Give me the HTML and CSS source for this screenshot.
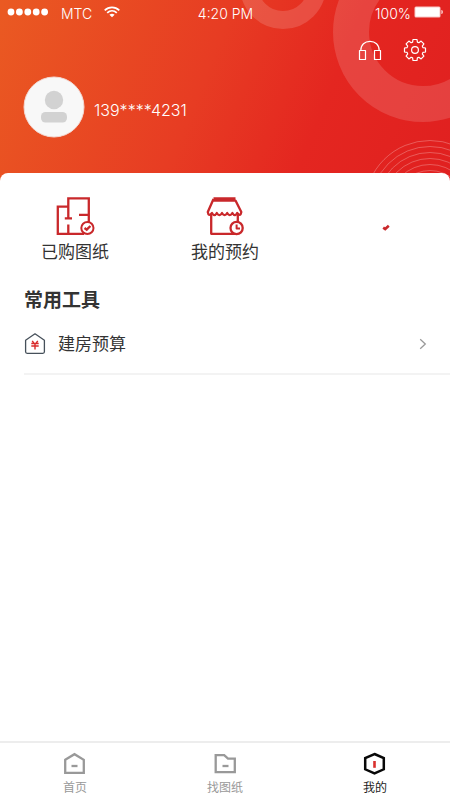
FILE: index.html
```html
<!DOCTYPE html>
<html lang="zh-CN">
<head>
<meta charset="utf-8">
<meta name="viewport" content="width=device-width, initial-scale=1">
<title>我的</title>
<link rel="stylesheet" href="styles.css">
</head>
<body>
<div class="app">
  <header class="hero">
    <svg class="hero-art" viewBox="0 0 450 182" preserveAspectRatio="xMaxYMin slice" fill="none" stroke="#fff" aria-hidden="true">
      <circle cx="423" cy="32" r="72" stroke-width="36" stroke-opacity=".14"/>
      <circle cx="283" cy="-14" r="34" stroke-width="18" stroke-opacity=".15"/>
      <g stroke-opacity=".26">
        <circle cx="430" cy="205.500" r="65"/><circle cx="430" cy="205.500" r="59"/><circle cx="430" cy="205.500" r="53"/>
        <circle cx="430" cy="205.500" r="47"/><circle cx="430" cy="205.500" r="41"/><circle cx="430" cy="205.500" r="35"/>
      </g>
    </svg>
    <div class="status">
      <div class="status-left">
        <svg width="42" height="8" viewBox="0 0 42 8" fill="#fff" aria-hidden="true"><circle cx="4" cy="4" r="3.4"/><circle cx="12.4" cy="4" r="3.4"/><circle cx="20.8" cy="4" r="3.4"/><circle cx="29.2" cy="4" r="3.4"/><circle cx="37.6" cy="4" r="3.4"/></svg>
        <span class="status-text">MTC</span>
        <svg width="16" height="12" viewBox="0 0 16 12" fill="none" stroke="#fff" stroke-width="1.7" aria-hidden="true"><path d="M.7 4.3C4.9.3 11.1.3 15.3 4.3"/><path d="M3.2 6.9C6 4.2 10 4.2 12.8 6.9"/><path d="M8 11.3 5.4 8.8Q8 6.7 10.6 8.8Z" fill="#fff" stroke="none"/></svg>
      </div>
      <span class="status-text">4:20 PM</span>
      <div class="status-right">
        <span class="status-text">100%</span>
        <svg width="30" height="12" viewBox="0 0 30 12" aria-hidden="true"><rect x=".5" y=".5" width="26" height="11" rx="1.5" fill="#fff" fill-opacity=".75"/><rect x="1.5" y="1.5" width="24" height="9" rx=".5" fill="#fff"/><path d="M27.5 4h.6q1.4 2 0 4h-.6z" fill="#fff"/></svg>
      </div>
    </div>
    <div class="tools">
      <button class="icon-button" type="button" aria-label="客服">
        <svg width="24" height="24" viewBox="0 0 24 24" fill="none" stroke="#fff" stroke-width="1.2" stroke-linejoin="round" aria-hidden="true"><path d="M2.8 12.5C2.8 6.6 6.8 3.4 12 3.4S21.2 6.6 21.2 12.5"/><rect x="1.5" y="12.5" width="6" height="9"/><rect x="16.5" y="12.5" width="6" height="9"/></svg>
      </button>
      <button class="icon-button" type="button" aria-label="设置">
        <svg width="24" height="24" viewBox="-12 -12 24 24" fill="none" stroke="#fff" stroke-width="1.2" stroke-linejoin="round" aria-hidden="true"><path d="M-2-10.5H2L2.4-7.9 3.9-7.3 6.1-8.9 8.9-6.1 7.3-3.9 7.9-2.4 10.5-2V2L7.9 2.4 7.3 3.9 8.9 6.1 6.1 8.9 3.9 7.3 2.4 7.9 2 10.5H-2L-2.4 7.9-3.9 7.3-6.1 8.9-8.9 6.1-7.3 3.9-7.9 2.4-10.5 2V-2L-7.9-2.4-7.3-3.9-8.9-6.1-6.1-8.9-3.9-7.3-2.4-7.9Z"/><circle r="3.4"/></svg>
      </button>
    </div>
    <div class="profile">
      <svg width="62" height="62" viewBox="0 0 62 62" aria-hidden="true"><circle cx="31" cy="31" r="30" fill="#f8f8f8" stroke="#f3d9d3"/><circle cx="31" cy="24" r="9.2" fill="#d2d2d2"/><rect x="18" y="36" width="26" height="10.5" rx="4.5" fill="#d2d2d2"/></svg>
      <span class="phone">139****4231</span>
    </div>
  </header>

  <main class="sheet">
    <nav class="actions" aria-label="快捷入口">
      <a class="action" href="#plans">
        <svg width="42" height="42" viewBox="0 0 42 42" fill="none" stroke="#c9282b" stroke-width="2.3" aria-hidden="true"><path d="M14.3 24.3V4.3H34.8V28M14.3 12.7H3.8V39.8H30M14.3 39.8V30.5M10.8 24.3H18M25 20.8H34.8"/><circle cx="33.4" cy="34" r="6.1" fill="#fff" stroke-width="2"/><path d="M30.5 34 32.7 35.6 36.4 32" stroke-width="2.4"/></svg>
        <span>已购图纸</span>
      </a>
      <a class="action" href="#bookings">
        <svg width="42" height="42" viewBox="0 0 42 42" fill="none" stroke="#c9282b" stroke-width="2.3" stroke-linejoin="round" aria-hidden="true"><path d="M9.5 4.3H31.5M9.5 6.6H31.5L37.3 18Q36.5 23.2 33.2 19 30.8 23.2 28.4 19 25.8 23.2 23.2 19 20.6 23.2 18 19 15.4 23.2 12.8 19 10.4 23.2 8 19 4.5 23.2 3.8 18L9.5 5"/><path d="M7.2 20.5V39.8H31M33.8 20.5V28"/><circle cx="32.6" cy="34" r="6.1" fill="#fff" stroke-width="2.3"/><path d="M32.6 30.5V34.4H36" stroke-width="2"/></svg>
        <span>我的预约</span>
      </a>
      <span class="action" aria-hidden="true">
        <svg width="42" height="42" viewBox="0 0 42 42" fill="none" stroke="#c9282b" stroke-width="2.6"><path d="M29.2 33.6 31.2 35 34.8 31.8"/></svg>
      </span>
    </nav>

    <section class="common">
      <h2>常用工具</h2>
      <a class="row" href="#budget">
        <svg width="22" height="22" viewBox="0 0 22 22" fill="none" aria-hidden="true"><path d="M1.6 7.2 11 .8 20.4 7.2V18.8Q20.4 20.3 18.9 20.3H3.1Q1.6 20.3 1.6 18.8Z" stroke="#46505a" stroke-width="1.3" stroke-linejoin="round"/><path d="M8.2 7.8 9.8 10M13.8 7.8 12.2 10M7.3 10.500H14.7M7.3 13H14.7M11 10.500V16.500" stroke="#d92b2b" stroke-width="1.4"/></svg>
        <span class="row-label">建房预算</span>
        <svg width="8" height="12" viewBox="0 0 8 12" fill="none" stroke="#999" stroke-width="1.3" aria-hidden="true"><path d="M1.2 1.2 6.3 6 1.2 10.8"/></svg>
      </a>
    </section>
  </main>

  <nav class="tabs" aria-label="主导航">
    <a class="tab" href="#home">
      <svg width="24" height="24" viewBox="0 0 24 24" fill="none" stroke="#999" stroke-width="2.3" aria-hidden="true"><path d="M2.2 7.8 11.500 2.2 20.8 7.8V20.900H2.2Z"/><path d="M8.500 14H14.500"/></svg>
      <span>首页</span>
    </a>
    <a class="tab" href="#drawings">
      <svg width="24" height="24" viewBox="0 0 24 24" fill="none" stroke="#999" stroke-width="2.3" aria-hidden="true"><path d="M2.7 3.2H11.2L15 6.6H21.8V20.2H2.7Z"/><path d="M9.500 14H15.500"/></svg>
      <span>找图纸</span>
    </a>
    <a class="tab tab-active" href="#me" aria-current="page">
      <svg width="24" height="24" viewBox="0 0 24 24" fill="none" stroke="#080808" stroke-width="2.5" aria-hidden="true"><path d="M11.500 2 20.8 6V17.3L11.500 21.3 2.2 17.3V6Z"/><path d="M11.500 9V15.800" stroke="#d9302e" stroke-width="2.6"/></svg>
      <span>我的</span>
    </a>
  </nav>
</div>
</body>
</html>
```
FILE: styles.css
```css
* {
  box-sizing: border-box;
}

body {
  margin: 0;
  background: #fff;
  color: #333;
  font-family: Inter, "Noto Sans CJK SC", sans-serif;
}

a {
  color: inherit;
  text-decoration: none;
}

svg {
  display: block;
  flex: none;
}

.app {
  display: flex;
  flex-direction: column;
  min-height: 100vh;
}

.hero {
  position: relative;
  padding-bottom: 44px;
  color: #fff;
  background: linear-gradient(112deg, #ea5a22 0%, #e73c23 45%, #e42620 70%, #e02020 100%);
}

.hero-art {
  position: absolute;
  inset: 0;
  width: 100%;
  height: 100%;
}

.status,
.tools,
.profile {
  position: relative;
}

.status {
  display: grid;
  grid-template-columns: 1fr auto 1fr;
  align-items: center;
  height: 28px;
  padding: 0 6px 0 7px;
}

.status-left,
.status-right {
  display: flex;
  align-items: center;
  padding-bottom: 4px;
}

.status-left {
  gap: 12px;
}

.status-right {
  justify-content: flex-end;
  gap: 3px;
}

.status-text {
  font-size: 14px;
  font-weight: 300;
  line-height: 20px;
}

.status-left .status-text,
.status-right .status-text {
  padding-top: 4px;
}

.tools {
  display: flex;
  justify-content: flex-end;
  gap: 21px;
  padding: 10px 23px 0;
}

.icon-button {
  padding: 0;
  border: 0;
  background: none;
}

.profile {
  display: flex;
  align-items: center;
  gap: 9px;
  padding: 14px 23px 0;
}

.phone {
  padding-top: 6px;
  font-size: 16px;
  font-weight: 300;
  line-height: 20px;
}

.sheet {
  position: relative;
  flex: 1;
  margin-top: -9px;
  border-radius: 8px 8px 0 0;
  background: #fff;
}

.actions {
  display: grid;
  grid-template-columns: repeat(3, 1fr);
  padding-top: 21px;
}

.action {
  display: flex;
  flex-direction: column;
  align-items: center;
  gap: 3px;
  font-size: 17px;
  line-height: 26px;
}

.common {
  padding: 22px 0 0 24px;
}

h2 {
  margin: 0;
  font-size: 19px;
  font-weight: 700;
  line-height: 28px;
}

.row {
  display: flex;
  align-items: center;
  gap: 12px;
  height: 60px;
  padding-right: 23px;
  border-bottom: 2px solid #f3f3f3;
  font-size: 17px;
  line-height: 26px;
}

.row-label {
  flex: 1;
}

.tabs {
  display: grid;
  grid-template-columns: repeat(3, 1fr);
  padding: 9px 0 3px;
  border-top: 2px solid #ededed;
  color: #999;
}

.tab {
  display: flex;
  flex-direction: column;
  align-items: center;
  gap: 3px;
  font-size: 12px;
  line-height: 18px;
}

.tab-active {
  color: #222;
}
```
